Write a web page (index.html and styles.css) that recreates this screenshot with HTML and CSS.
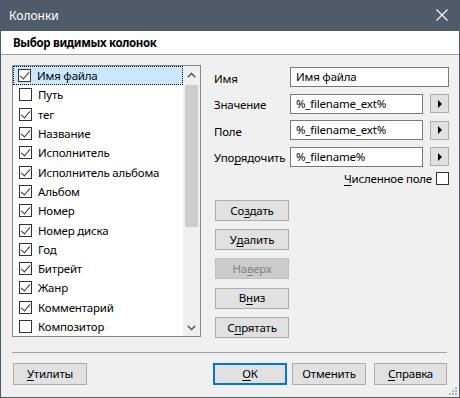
FILE: index.html
```html
<!DOCTYPE html>
<html lang="ru">
<head>
<meta charset="utf-8">
<title>Колонки</title>
<link rel="stylesheet" href="styles.css">
</head>
<body>
<div class="window">
  <div class="titlebar">
    <span class="title">Колонки</span>
    <svg class="close" width="12" height="12" viewBox="0 0 12 12"><path d="M0.5 0.5 L11.5 11.5 M11.5 0.5 L0.5 11.5" stroke="#ffffff" stroke-width="1.1" fill="none"/></svg>
  </div>
  <div class="header">Выбор видимых колонок</div>
  <div class="content">
    <div class="listbox">
      <ul class="items">
        <li class="item selected"><span class="cb on"></span>Имя файла</li>
        <li class="item"><span class="cb"></span>Путь</li>
        <li class="item"><span class="cb on"></span>тег</li>
        <li class="item"><span class="cb on"></span>Название</li>
        <li class="item"><span class="cb on"></span>Исполнитель</li>
        <li class="item"><span class="cb on"></span>Исполнитель альбома</li>
        <li class="item"><span class="cb on"></span>Альбом</li>
        <li class="item"><span class="cb on"></span>Номер</li>
        <li class="item"><span class="cb on"></span>Номер диска</li>
        <li class="item"><span class="cb on"></span>Год</li>
        <li class="item"><span class="cb on"></span>Битрейт</li>
        <li class="item"><span class="cb on"></span>Жанр</li>
        <li class="item"><span class="cb on"></span>Комментарий</li>
        <li class="item"><span class="cb"></span>Композитор</li>
      </ul>
      <div class="scrollbar">
        <div class="sb-arrow"><svg width="9" height="6" viewBox="0 0 9 6"><path d="M0.8 5.2 L4.5 1.5 L8.2 5.2" stroke="#606060" stroke-width="1.6" fill="none"/></svg></div>
        <div class="sb-track"><div class="sb-thumb"></div></div>
        <div class="sb-arrow"><svg width="9" height="6" viewBox="0 0 9 6"><path d="M0.8 0.8 L4.5 4.5 L8.2 0.8" stroke="#606060" stroke-width="1.6" fill="none"/></svg></div>
      </div>
    </div>
    <div class="side">
      <div class="form">
        <span class="lbl">Имя</span>
        <div class="field wide">Имя файла</div>
        <span class="lbl">Значение</span>
        <div class="field">%_filename_ext%</div>
        <div class="arrow-btn"><span class="tri"></span></div>
        <span class="lbl">Поле</span>
        <div class="field">%_filename_ext%</div>
        <div class="arrow-btn"><span class="tri"></span></div>
        <span class="lbl">Упо<u>р</u>ядочить</span>
        <div class="field">%_filename%</div>
        <div class="arrow-btn"><span class="tri"></span></div>
      </div>
      <div class="numeric"><span><u>Ч</u>исленное поле</span><span class="cb plain"></span></div>
      <div class="actions">
        <div class="btn">Со<u>з</u>дать</div>
        <div class="btn">У<u>д</u>алить</div>
        <div class="btn disabled">На<u>в</u>ерх</div>
        <div class="btn">В<u>н</u>из</div>
        <div class="btn">С<u>п</u>рятать</div>
      </div>
    </div>
  </div>
  <div class="footer">
    <div class="sep"></div>
    <div class="footer-buttons">
      <div class="btn"><u>У</u>тилиты</div>
      <div class="spacer"></div>
      <div class="btn default"><u>О</u>К</div>
      <div class="btn cancel">Отменить</div>
      <div class="btn help"><u>С</u>правка</div>
    </div>
  </div>
  <svg class="grip" width="9" height="9" viewBox="0 0 9 9">
    <rect x="7" y="1" width="2" height="2" fill="#b4b4b4"/>
    <rect x="4" y="4" width="2" height="2" fill="#b4b4b4"/>
    <rect x="7" y="4" width="2" height="2" fill="#b4b4b4"/>
    <rect x="1" y="7" width="2" height="2" fill="#b4b4b4"/>
    <rect x="4" y="7" width="2" height="2" fill="#b4b4b4"/>
    <rect x="7" y="7" width="2" height="2" fill="#b4b4b4"/>
  </svg>
</div>
</body>
</html>
```

FILE: styles.css
```css
* { box-sizing: border-box; }
html, body { margin: 0; padding: 0; }
body {
  width: 460px;
  height: 398px;
  font-family: "Noto Sans", "Liberation Sans", sans-serif;
  font-size: 11.5px;
  letter-spacing: -0.2px;
  color: #000;
  overflow: hidden;
}
u { text-decoration: underline; text-underline-offset: 2px; text-decoration-thickness: 1px; }
.window {
  position: relative;
  width: 460px;
  height: 398px;
  border: 1px solid #4f5b69;
  border-top: none;
  background: #f0f0f0;
  display: flex;
  flex-direction: column;
}
.titlebar {
  height: 31px;
  margin: 0 -1px;
  background: #4f5b69;
  display: flex;
  align-items: center;
  justify-content: space-between;
  padding: 0 12px 1px 9px;
  color: #fff;
  font-size: 12px;
  letter-spacing: 0;
}
.close { display: block; }
.header {
  height: 24px;
  background: #fff;
  border-bottom: 1px solid #a0a0a0;
  font-weight: bold;
  letter-spacing: -0.35px;
  padding: 3px 0 0 12px;
  line-height: 17px;
}
.content {
  display: flex;
  padding: 10px 0 0 11px;
}
.listbox {
  width: 189px;
  height: 272px;
  border: 1px solid #828790;
  background: #fff;
  display: flex;
}
.items {
  list-style: none;
  margin: 0;
  padding: 0;
  flex: 1;
}
.item {
  height: 19.3px;
  display: flex;
  align-items: center;
  padding-left: 5px;
  border: 1px solid transparent;
  white-space: nowrap;
}
.item.selected {
  background: #cce8ff;
  border: 1px dotted #000;
}
.cb {
  width: 13px;
  height: 13px;
  border: 1px solid #333;
  background: #fff;
  margin-right: 6px;
  flex: none;
  position: relative;
}
.cb.on::after {
  content: "";
  position: absolute;
  left: 3px;
  top: 0px;
  width: 4px;
  height: 8px;
  border-right: 1.3px solid #333;
  border-bottom: 1.3px solid #333;
  transform: rotate(40deg);
}
.item.selected .cb { margin-left: -1px; }
.scrollbar {
  width: 17px;
  background: #f0f0f0;
  display: flex;
  flex-direction: column;
}
.sb-arrow {
  height: 17px;
  display: flex;
  align-items: center;
  justify-content: center;
}
.sb-track { flex: 1; padding: 2px 2px 0; }
.sb-thumb {
  height: 142px;
  background: #cdcdcd;
}
.side {
  margin-left: 13px;
  padding-top: 2px;
  display: flex;
  flex-direction: column;
}
.form {
  display: grid;
  grid-template-columns: 76px 133px 26px;
  grid-auto-rows: 20px;
  row-gap: 6.6px;
  align-items: center;
}
.lbl { line-height: 20px; padding-top: 3px; white-space: nowrap; }
.field {
  height: 20px;
  border: 1px solid #7a7a7a;
  background: #fff;
  padding: 0 0 0 5px;
  line-height: 17px;
  white-space: nowrap;
}
.field.wide { grid-column: 2 / 4; }
.arrow-btn {
  justify-self: end;
  width: 19px;
  height: 19px;
  background: #e1e1e1;
  border: 1px solid #adadad;
  display: flex;
  align-items: center;
  justify-content: center;
}
.tri {
  width: 0;
  height: 0;
  border-top: 4px solid transparent;
  border-bottom: 4px solid transparent;
  border-left: 4px solid #000;
  margin-left: 1px;
}
.numeric {
  display: flex;
  justify-content: flex-end;
  align-items: center;
  margin-top: 5px;
  height: 14px;
}
.numeric .cb.plain { margin: 0 0 0 4px; }
.actions {
  margin-top: 14px;
  margin-left: 1px;
  display: flex;
  flex-direction: column;
  gap: 8.3px;
}
.btn {
  width: 74px;
  height: 21px;
  background: #e1e1e1;
  border: 1px solid #adadad;
  display: flex;
  align-items: center;
  justify-content: center;
  white-space: nowrap;
  line-height: 1;
}
.btn.disabled {
  background: #cccccc;
  border-color: #bfbfbf;
  color: #838383;
}
.footer {
  margin-top: 14px;
  padding: 0 11px 0 11px;
}
.sep {
  height: 1px;
  background: #a0a0a0;
  margin-right: 1px;
}
.footer-buttons {
  display: flex;
  margin-top: 10px;
  padding-left: 1px;
}
.footer-buttons .btn { height: 22px; }
.spacer { flex: 1; }
.btn.default {
  border: 2px solid #0078d7;
}
.btn.cancel { margin-left: 5px; width: 74px; }
.btn.help { margin-left: 8px; width: 73px; margin-right: 1px; }
.grip {
  position: absolute;
  right: 2px;
  bottom: 2px;
}
```
